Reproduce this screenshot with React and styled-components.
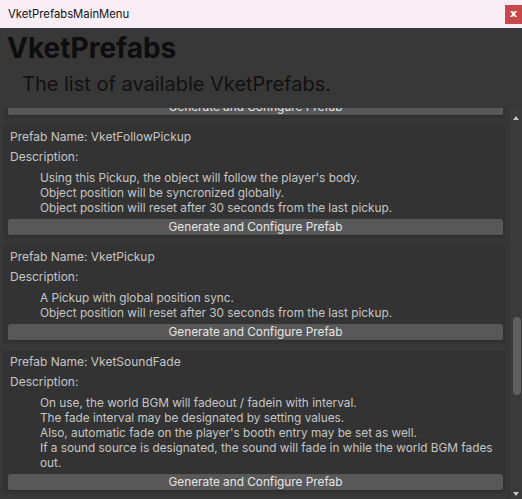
import { useLayoutEffect, useRef } from "react";
import styled, { createGlobalStyle } from "styled-components";

const prefabs = [
    {
        name: "VketChair",
        lines: [
            "A chair which the player can sit on.",
            "Seat position can be adjusted.",
        ],
    },
    {
        name: "VketFollowPickup",
        lines: [
            "Using this Pickup, the object will follow the player's body.",
            "Object position will be syncronized globally.",
            "Object position will reset after 30 seconds from the last pickup.",
        ],
    },
    {
        name: "VketPickup",
        lines: [
            "A Pickup with global position sync.",
            "Object position will reset after 30 seconds from the last pickup.",
        ],
    },
    {
        name: "VketSoundFade",
        lines: [
            "On use, the world BGM will fadeout / fadein with interval.",
            "The fade interval may be designated by setting values.",
            "Also, automatic fade on the player's booth entry may be set as well.",
            "If a sound source is designated, the sound will fade in while the world BGM fades out.",
        ],
    },
    {
        name: "VketVideoPlayer",
        lines: ["A video player that can be placed in the booth."],
    },
];

export default function App() {
    const scrollRef = useRef(null);

    useLayoutEffect(() => {
        // keep the list scrolled to where the first card is almost gone
        if (scrollRef.current) scrollRef.current.scrollTop = 88;
    }, []);

    return (
        <Window>
            <GlobalStyle />
            <TitleBar>
                <span>VketPrefabsMainMenu</span>
                <CloseButton>x</CloseButton>
            </TitleBar>
            <Header>
                <h1>VketPrefabs</h1>
                <h2>The list of available VketPrefabs.</h2>
            </Header>
            <ScrollArea>
                <List ref={scrollRef}>
                    {prefabs.map((p) => (
                        <Card key={p.name}>
                            <Label>Prefab Name: {p.name}</Label>
                            <Label>Description:</Label>
                            <Description>
                                {p.lines.map((l) => (
                                    <p key={l}>{l}</p>
                                ))}
                            </Description>
                            <GenerateButton>Generate and Configure Prefab</GenerateButton>
                        </Card>
                    ))}
                </List>
                <ScrollBar>
                    <Arrow />
                    <Track>
                        <Thumb />
                    </Track>
                    <Arrow down />
                </ScrollBar>
            </ScrollArea>
        </Window>
    );
}

const GlobalStyle = createGlobalStyle`
body{
    margin: 0;
    background: #383838;
    font-family: Inter, "Liberation Sans", sans-serif;
}
`
const Window = styled.div`
width: 522px;
height: 499px;
display: flex;
flex-direction: column;
overflow: hidden;
background-color: #383838;
`
const TitleBar = styled.div`
height: 28px;
flex-shrink: 0;
display: flex;
align-items: flex-start;
justify-content: space-between;
background-color: #f9eef6;
padding-left: 8px;
span{
    font-family: Inter, "Liberation Sans", sans-serif;
    font-size: 11.3px;
    line-height: 28px;
    color: #111111;
}
`
const CloseButton = styled.div`
width: 17px;
height: 19px;
margin-top: 5px;
background-color: #c8474d;
color: #ffffff;
font-family: "DejaVu Sans", sans-serif;
font-weight: bold;
font-size: 11px;
line-height: 17px;
text-align: center;
`
const Header = styled.div`
height: 80px;
flex-shrink: 0;
padding-left: 7px;
h1{
    margin: 0;
    padding-top: 2px;
    font-size: 28px;
    line-height: 36px;
    font-weight: 700;
    color: #0d0d0d;
}
h2{
    margin: 5px 0 0 15px;
    font-size: 20px;
    line-height: 26px;
    font-weight: 400;
    color: #111111;
}
`
const ScrollArea = styled.div`
flex: 1;
min-height: 0;
display: flex;
`
const List = styled.div`
flex: 1;
overflow: hidden;
padding: 0 2px 0 3px;
display: flex;
flex-direction: column;
gap: 6px;
`
const Card = styled.div`
flex-shrink: 0;
display: flex;
flex-direction: column;
background-color: #333333;
padding: 2px 3px 3px 7px;
`
const Label = styled.div`
font-size: 12px;
line-height: 20px;
color: #c6c6c6;
`
const Description = styled.div`
padding: 4px 0 0 30px;
p{
    margin: 0;
    font-size: 11.8px;
    line-height: 15px;
    color: #c6c6c6;
    padding-right: 6px;
}
`
const GenerateButton = styled.button`
height: 17px;
margin: 3px 0 0 -2px;
padding: 0;
border: none;
border-bottom: 1px solid #2a2a2a;
border-radius: 3px;
background-color: #585858;
color: #e6e6e6;
font-family: Inter, "Liberation Sans", sans-serif;
font-size: 11.8px;
line-height: 16px;
`
const ScrollBar = styled.div`
width: 13px;
flex-shrink: 0;
display: flex;
flex-direction: column;
align-items: center;
background-color: #3a3a3a;
border-left: 1px solid #2f2f2f;
padding: 8px 0 3px;
`
const Arrow = styled.div`
width: 0;
height: 0;
border-left: 3px solid transparent;
border-right: 3px solid transparent;
border-bottom: ${(props) => (props.down ? "0" : "4px solid #c4c4c4")};
border-top: ${(props) => (props.down ? "4px solid #c4c4c4" : "0")};
`
const Track = styled.div`
flex: 1;
width: 100%;
display: flex;
flex-direction: column;
align-items: center;
padding-top: 197px;
`
const Thumb = styled.div`
width: 8px;
height: 78px;
margin-left: 2px;
border-radius: 4px;
background-color: #5e5e5e;
`
